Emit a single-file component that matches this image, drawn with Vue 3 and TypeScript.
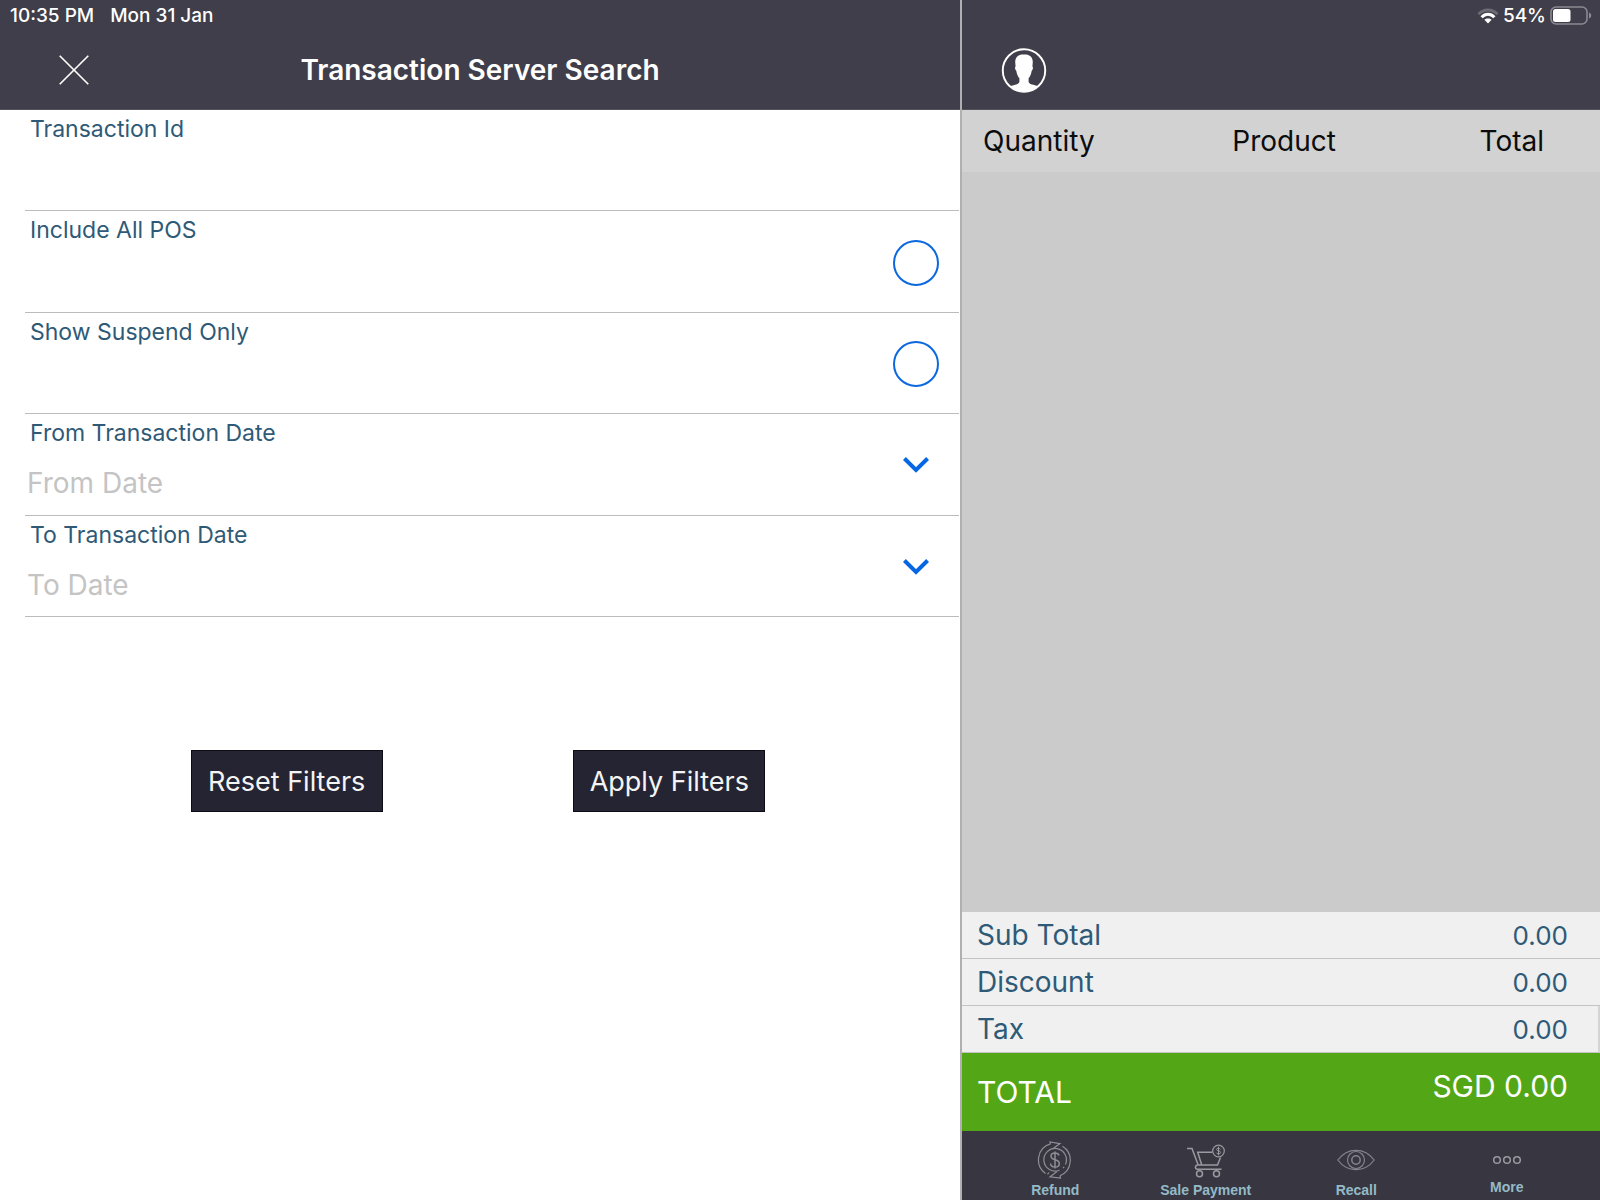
<script setup lang="ts">
import { ref } from 'vue'

interface Line {
  label: string
  value: string
}

const transactionId = ref('')
const includeAllPos = ref(false)
const suspendOnly = ref(false)
const fromDate = ref('')
const toDate = ref('')

const lines: Line[] = [
  { label: 'Sub Total', value: '0.00' },
  { label: 'Discount', value: '0.00' },
  { label: 'Tax', value: '0.00' },
]

function resetFilters(): void {
  transactionId.value = ''
  includeAllPos.value = false
  suspendOnly.value = false
  fromDate.value = ''
  toDate.value = ''
}
</script>

<template>
  <div class="screen">
    <main class="search">
      <header class="bar">
        <div class="status">
          <span>10:35 PM</span>
          <span>Mon 31 Jan</span>
        </div>
        <div class="nav">
          <button class="icon-button" type="button" aria-label="Close">
            <svg width="30" height="30" viewBox="0 0 30 30" fill="none" stroke="#fff" stroke-width="1.6">
              <path d="M.7.7l28.600 28.600M29.300.7L.7 29.300" />
            </svg>
          </button>
          <h1>Transaction Server Search</h1>
        </div>
      </header>

      <form @submit.prevent>
        <div class="fields">
          <div class="field">
            <label for="transaction-id">Transaction Id</label>
            <input id="transaction-id" v-model="transactionId" class="entry" type="text" />
          </div>
          <div class="field check">
            <label for="include-all">Include All POS</label>
            <input id="include-all" v-model="includeAllPos" class="round" type="checkbox" />
          </div>
          <div class="field check">
            <label for="suspend-only">Show Suspend Only</label>
            <input id="suspend-only" v-model="suspendOnly" class="round" type="checkbox" />
          </div>
          <div class="field check">
            <div class="stack">
              <label for="from-date">From Transaction Date</label>
              <input id="from-date" v-model="fromDate" class="entry" type="text" placeholder="From Date" />
            </div>
            <button class="icon-button chevron" type="button" aria-label="Choose from date">
              <svg width="26" height="16" viewBox="0 0 26 16" fill="none" stroke="#0567e3" stroke-width="4">
                <path d="M1.400 1.500L13 13 24.600 1.500" />
              </svg>
            </button>
          </div>
          <div class="field check">
            <div class="stack">
              <label for="to-date">To Transaction Date</label>
              <input id="to-date" v-model="toDate" class="entry" type="text" placeholder="To Date" />
            </div>
            <button class="icon-button chevron" type="button" aria-label="Choose to date">
              <svg width="26" height="16" viewBox="0 0 26 16" fill="none" stroke="#0567e3" stroke-width="4">
                <path d="M1.400 1.500L13 13 24.600 1.500" />
              </svg>
            </button>
          </div>
        </div>
        <div class="actions">
          <button type="button" @click="resetFilters">Reset Filters</button>
          <button type="submit">Apply Filters</button>
        </div>
      </form>
    </main>

    <aside class="basket">
      <header class="bar">
        <div class="status right">
          <svg width="22" height="16" viewBox="0 0 22 16" fill="none" stroke-width="3">
            <path d="M1.500 6.200C6.500.5 15.500.5 20.500 6.200" stroke="#6b6a75" />
            <path d="M4.600 9.200C8.300 5.200 13.700 5.200 17.400 9.200" stroke="#fff" />
            <path d="M7.400 11.800C9.300 9.900 12.700 9.900 14.600 11.800L11 15.600z" fill="#fff" />
          </svg>
          <span>54%</span>
          <svg width="42" height="20" viewBox="0 0 42 20">
            <rect x="1" y="1" width="36" height="17" rx="5" fill="none" stroke="#8b8a93" stroke-width="1.600" />
            <rect x="3" y="3" width="17.500" height="13" rx="2.500" fill="#fff" />
            <path d="M39 6.500c3 1 3 5 0 6z" fill="#8b8a93" />
          </svg>
        </div>
        <div class="nav">
          <button class="icon-button avatar" type="button" aria-label="Customer">
            <svg width="46" height="45" viewBox="0 0 46 46">
              <circle cx="23" cy="23" r="21.700" fill="none" stroke="#fff" stroke-width="2" />
              <path
                d="M23 6.500c-5.600 0-9 2.800-9 7.800l.4 4.700c-1 .3-.6 3.400.7 4.200.7 4 1.700 6 3.200 7.800v3.600c0 2.500-5.500 3.300-10 4.400a21.500 21.500 0 0 0 29.400 0c-4.500-1.100-10-1.900-10-4.400V31c1.500-1.800 2.500-3.800 3.200-7.800 1.300-.8 1.700-3.900.7-4.200l.4-4.700c0-5-3.400-7.800-9-7.800z"
                fill="#fff"
              />
            </svg>
          </button>
        </div>
      </header>

      <div class="items">
        <table>
          <thead>
            <tr>
              <th scope="col" class="quantity">Quantity</th>
              <th scope="col" class="product">Product</th>
              <th scope="col" class="total">Total</th>
            </tr>
          </thead>
        </table>
      </div>

      <dl class="sums">
        <div v-for="line in lines" :key="line.label" class="line">
          <dt>{{ line.label }}</dt>
          <dd>{{ line.value }}</dd>
        </div>
        <div class="grand">
          <dt>TOTAL</dt>
          <dd>SGD 0.00</dd>
        </div>
      </dl>

      <nav class="tabs">
        <a href="#refund">
          <svg width="36" height="38" viewBox="0 0 36 38" fill="none" stroke="#8f8e96" stroke-width="1.200">
            <path d="M13.500 2.900A16.600 16.600 0 0 0 8.500 32.400M13.500 2.900L13 1 23 2.600 16.500 7.200M25.500 5.300A16.600 16.600 0 0 1 23 34.700M23 34.700L23.500 37 13 35.800 20 30.600M10.500 33.400L12 31.500" />
            <path d="M28.400 23.500A11.300 11.300 0 1 0 22.500 29.200M27.200 25.800L26 27.200" />
            <path d="M22 14.500C21.500 12.500 20 12 18 12c-2.500 0-4 1.200-4 3.200 0 4.600 8.300 2.400 8.300 7.200 0 2.300-1.800 3.600-4.300 3.600-2.600 0-4.300-1.200-4.500-3.500M18 10.500v17" stroke-width="1.500" />
          </svg>
          <span>Refund</span>
        </a>
        <a href="#sale-payment">
          <svg width="38" height="38" viewBox="0 0 38 38" fill="none" stroke="#9a99a0" stroke-width="1.500">
            <path d="M0 7.500h5l6.200 16.500h19.300l3-7.500M25.500 11.300H10.700l3.900 12.300M11 24c-3 0-3.600 4.200-.5 4.200h24" />
            <circle cx="12.500" cy="32.700" r="3" />
            <circle cx="29.500" cy="32.700" r="3" />
            <circle cx="31.500" cy="10" r="5.800" stroke-width="1.200" />
            <path d="M33.500 8.300c-.6-1.500-3.900-1.500-3.900.1 0 1.900 4 1 4 3.100 0 1.900-3.700 1.900-4.200.2M31.500 5.700v8.600" stroke-width="1" />
          </svg>
          <span>Sale Payment</span>
        </a>
        <a href="#recall">
          <svg width="38" height="38" viewBox="0 0 38 38" fill="none" stroke="#85848d" stroke-width="1.200">
            <path d="M.8 19C6 12 12 9.300 19 9.300S32 12 37.200 19C32 26 26 28.700 19 28.700S6 26 .8 19z" />
            <circle cx="19" cy="19" r="8.500" />
            <circle cx="19" cy="19" r="4.200" stroke-width="1.500" />
          </svg>
          <span>Recall</span>
        </a>
        <a href="#more" class="more">
          <svg width="38" height="38" viewBox="0 0 38 38" fill="none" stroke="#9a99a0" stroke-width="1.500">
            <circle cx="9" cy="19" r="3.300" />
            <circle cx="19" cy="19" r="3.300" />
            <circle cx="29" cy="19" r="3.300" />
          </svg>
          <span>More</span>
        </a>
      </nav>
    </aside>
  </div>
</template>

<style>
body {
  margin: 0;
}
</style>

<style scoped>
.screen {
  display: flex;
  min-height: 100vh;
  background: #fff;
  font-family: Inter, "Open Sans", sans-serif;
}

.screen *,
.screen *::before {
  box-sizing: border-box;
}

svg {
  display: block;
  flex: none;
}

.search {
  flex: 0 0 60%;
  min-width: 0;
}

.basket {
  flex: 1;
  min-width: 0;
  display: flex;
  flex-direction: column;
  border-left: 2px solid #b0b0b2;
}

.bar {
  height: 110px;
  background: #3f3e4a;
  border-bottom: 1px solid #53525c;
  color: #fff;
}

.status {
  display: flex;
  align-items: center;
  gap: 16px;
  height: 31px;
  padding: 0 8px 0 10px;
  font-size: 19px;
  font-weight: 500;
}

.status.right {
  justify-content: flex-end;
  gap: 4px;
}

.nav {
  display: grid;
  grid-template-columns: 147px 1fr 147px;
  align-items: center;
  justify-items: center;
  height: 78px;
}

h1 {
  margin: 0;
  font-size: 28px;
  line-height: 36px;
  font-weight: 600;
  white-space: nowrap;
}

.icon-button {
  padding: 0;
  border: 0;
  background: none;
}

.avatar {
  justify-self: start;
  margin-left: 39px;
}

.fields {
  display: grid;
  grid-template-rows: repeat(5, 1fr);
  height: 507px;
  padding: 0 1px 0 25px;
}

.field {
  border-bottom: 1px solid #bcbcbc;
}

.check {
  display: flex;
  justify-content: space-between;
}

.stack {
  flex: 1;
}

.field label {
  display: block;
  padding: 6px 0 0 5px;
  font-size: 23px;
  line-height: 26px;
  font-weight: 400;
  color: #2f5a77;
}

.entry {
  display: block;
  width: 100%;
  height: 40px;
  margin-top: 17px;
  padding: 0 2px;
  border: 0;
  outline: 0;
  background: transparent;
  font-family: inherit;
  font-size: 28px;
  font-weight: 400;
  color: #2f5a77;
}

.entry::placeholder {
  color: #c4c4c4;
  opacity: 1;
}

.round {
  appearance: none;
  align-self: center;
  width: 46px;
  height: 46px;
  margin: 2px 20px 0 0;
  border: 2px solid #0b68de;
  border-radius: 50%;
}

.round:checked {
  background: #0b68de;
}

.chevron {
  align-self: center;
  margin: 2px 30px 0 0;
}

.actions {
  display: flex;
  justify-content: space-evenly;
  padding: 133px 4px 40px 0;
}

.actions button {
  width: 192px;
  height: 62px;
  padding: 0;
  border: 1px solid #0c0b16;
  background: #252433;
  color: #f4f4f4;
  font-family: inherit;
  font-size: 27px;
  font-weight: 400;
}

.items {
  flex: 1;
  background: #cbcbcb;
}

table {
  width: 100%;
  table-layout: fixed;
  border-collapse: collapse;
  background: #d2d2d2;
}

th {
  height: 62px;
  padding: 0;
  font-size: 28px;
  font-weight: 400;
  color: #0c0c0c;
}

.quantity {
  width: 31%;
  padding-left: 21px;
  text-align: left;
}

.product {
  width: 39%;
}

.total {
  padding-right: 56px;
  text-align: right;
}

.sums {
  margin: 0;
}

.sums dd {
  margin: 0;
}

.line,
.grand {
  display: flex;
  justify-content: space-between;
  align-items: center;
  padding: 0 32px 0 15px;
}

.line {
  height: 47px;
  border-bottom: 1px solid #c4c4c4;
  background: #f0f0f0;
  font-size: 28px;
  font-weight: 400;
  color: #2f5a77;
}

.line dd {
  font-size: 26px;
}

.line:nth-child(3) {
  padding-right: 30px;
  border-right: 2px solid #d4d4d4;
}

.grand {
  height: 78px;
  background: #53a717;
  font-size: 30px;
  font-weight: 400;
  color: #fff;
}

.grand dd {
  padding-bottom: 12px;
}

.tabs {
  display: grid;
  grid-template-columns: repeat(4, 1fr);
  height: 69px;
  padding: 10px 18px 0;
  background: #383741;
}

.tabs a {
  display: flex;
  flex-direction: column;
  align-items: center;
  gap: 3px;
  color: #95bac7;
  font-family: "Liberation Sans", Arial, sans-serif;
  font-size: 14px;
  line-height: 16px;
  font-weight: 700;
  text-decoration: none;
}

.tabs .more {
  gap: 0;
}
</style>
